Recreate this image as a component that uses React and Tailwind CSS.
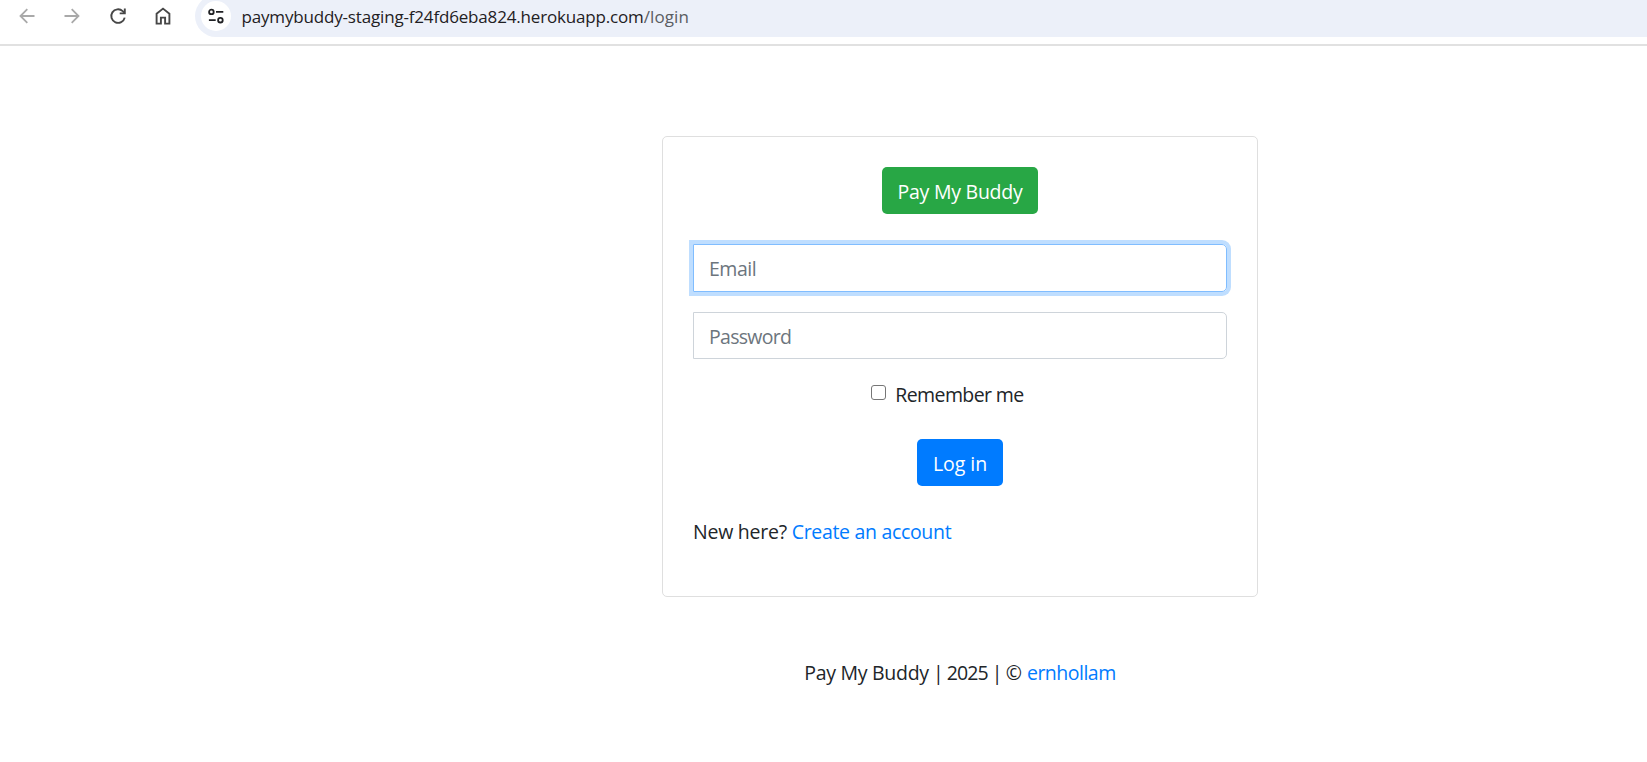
function BackIcon({ flip }) {
  return (
    <svg
      width="20"
      height="20"
      viewBox="0 0 20 20"
      fill="none"
      stroke="#a9a9a9"
      strokeWidth="1.8"
      className={flip ? 'block shrink-0 -scale-x-100' : 'block shrink-0'}
    >
      <path d="M17.5 10H3.8M10.3 3.2L3.5 10l6.8 6.8" />
    </svg>
  );
}

function ReloadIcon() {
  return (
    <svg width="20" height="20" viewBox="0 0 20 20" fill="none" stroke="#474747" strokeWidth="1.9" className="ml-px block shrink-0">
      <path d="M16.7 11.6A6.8 6.8 0 1 1 14.7 5.1L16.2 6.7" />
      <path d="M16.8 2.5V7.4H11.7" />
    </svg>
  );
}

function HomeIcon() {
  return (
    <svg width="20" height="20" viewBox="0 0 20 20" fill="none" stroke="#474747" strokeWidth="1.9" className="block shrink-0">
      <path d="M3.6 17.6V7.7L10 2.6l6.4 5.1v9.9h-4.3v-6H7.9v6Z" />
    </svg>
  );
}

function SiteInfoIcon() {
  return (
    <svg width="18" height="18" viewBox="0 0 18 18" fill="none" stroke="#202124" strokeWidth="1.8" className="block">
      <circle cx="4.4" cy="4.9" r="2.3" />
      <path d="M9 4.9h7.3M1.9 13.2h6.8" />
      <circle cx="13.4" cy="13.2" r="2.3" />
    </svg>
  );
}

function BrowserBar() {
  return (
    <header className="flex h-[46px] items-start overflow-hidden border-b-2 border-[#e1e1e1] bg-white pl-[17px]">
      <div className="flex h-[31px] shrink-0 items-center gap-[25px]">
        <BackIcon />
        <BackIcon flip />
        <ReloadIcon />
        <HomeIcon />
      </div>
      <div className="-mt-[5px] ml-[22px] flex h-[42px] flex-1 items-center rounded-l-full bg-[#ecf0f9] pl-1.5">
        <div className="flex size-[30px] items-center justify-center rounded-full bg-white">
          <SiteInfoIcon />
        </div>
        <div className="ml-[10.5px] whitespace-nowrap pt-0.5 text-[17px] leading-6 text-[#1f2023]">
          <span className="tracking-[-0.17px]">paymybuddy-staging-f24fd6eba824.herokuapp.com</span>
          <span className="tracking-[0.1px] text-[#5a5d62]">/login</span>
        </div>
      </div>
    </header>
  );
}

export default function App() {
  return (
    <div className="min-h-screen bg-white font-['Open_Sans',sans-serif] text-[19.5px] leading-[30px] text-[#212529]">
      <BrowserBar />
      <main className="ml-[662px] w-[596px] pt-[90px]">
        <form className="flex h-[461px] flex-col items-center rounded-[5px] border border-[#dfdfdf] px-[30px] pt-[30px]">
          <button
            type="button"
            className="h-[47px] w-[156px] shrink-0 whitespace-nowrap rounded-[5px] bg-[#28a745] pt-0.5 tracking-[-0.25px] text-white"
          >
            Pay My Buddy
          </button>
          <input
            type="email"
            placeholder="Email"
            className="mt-[30px] h-12 w-full shrink-0 rounded-r-[5px] border border-[#80bdff] px-[15px] pt-px tracking-[-0.5px] shadow-[0_0_0_4px_#bfdeff] outline-none placeholder:text-[#6c757d]"
          />
          <input
            type="password"
            placeholder="Password"
            className="mt-5 h-[47px] w-full shrink-0 rounded-r-[5px] border border-[#ced4da] px-[15px] pt-0.5 tracking-[-0.7px] outline-none placeholder:text-[#6c757d]"
          />
          <label className="mr-[25px] mt-5 flex h-[30px] items-start">
            <input
              type="checkbox"
              className="mt-[6px] size-[15px] appearance-none rounded-[3px] border border-[#767676] bg-white"
            />
            <span className="ml-[9px] pt-px tracking-[-0.6px]">Remember me</span>
          </label>
          <button
            type="button"
            className="mt-[30px] h-[47px] w-[86px] shrink-0 whitespace-nowrap rounded-[5px] bg-[#007bff] pt-0.5 tracking-[-0.05px] text-white"
          >
            Log in
          </button>
          <p className="mt-[31px] self-start tracking-[-0.24px]">
            New here?{' '}
            <a href="#" className="tracking-[-0.32px] text-[#007bff]">
              Create an account
            </a>
          </p>
        </form>
        <footer className="mt-[61px] text-center">
          <span className="tracking-[-0.28px]">Pay My Buddy</span>
          <span className="tracking-[-0.95px]"> | 2025 | </span>
          <span>© </span>
          <a href="#" className="tracking-[-0.5px] text-[#007bff]">
            ernhollam
          </a>
        </footer>
      </main>
    </div>
  );
}
